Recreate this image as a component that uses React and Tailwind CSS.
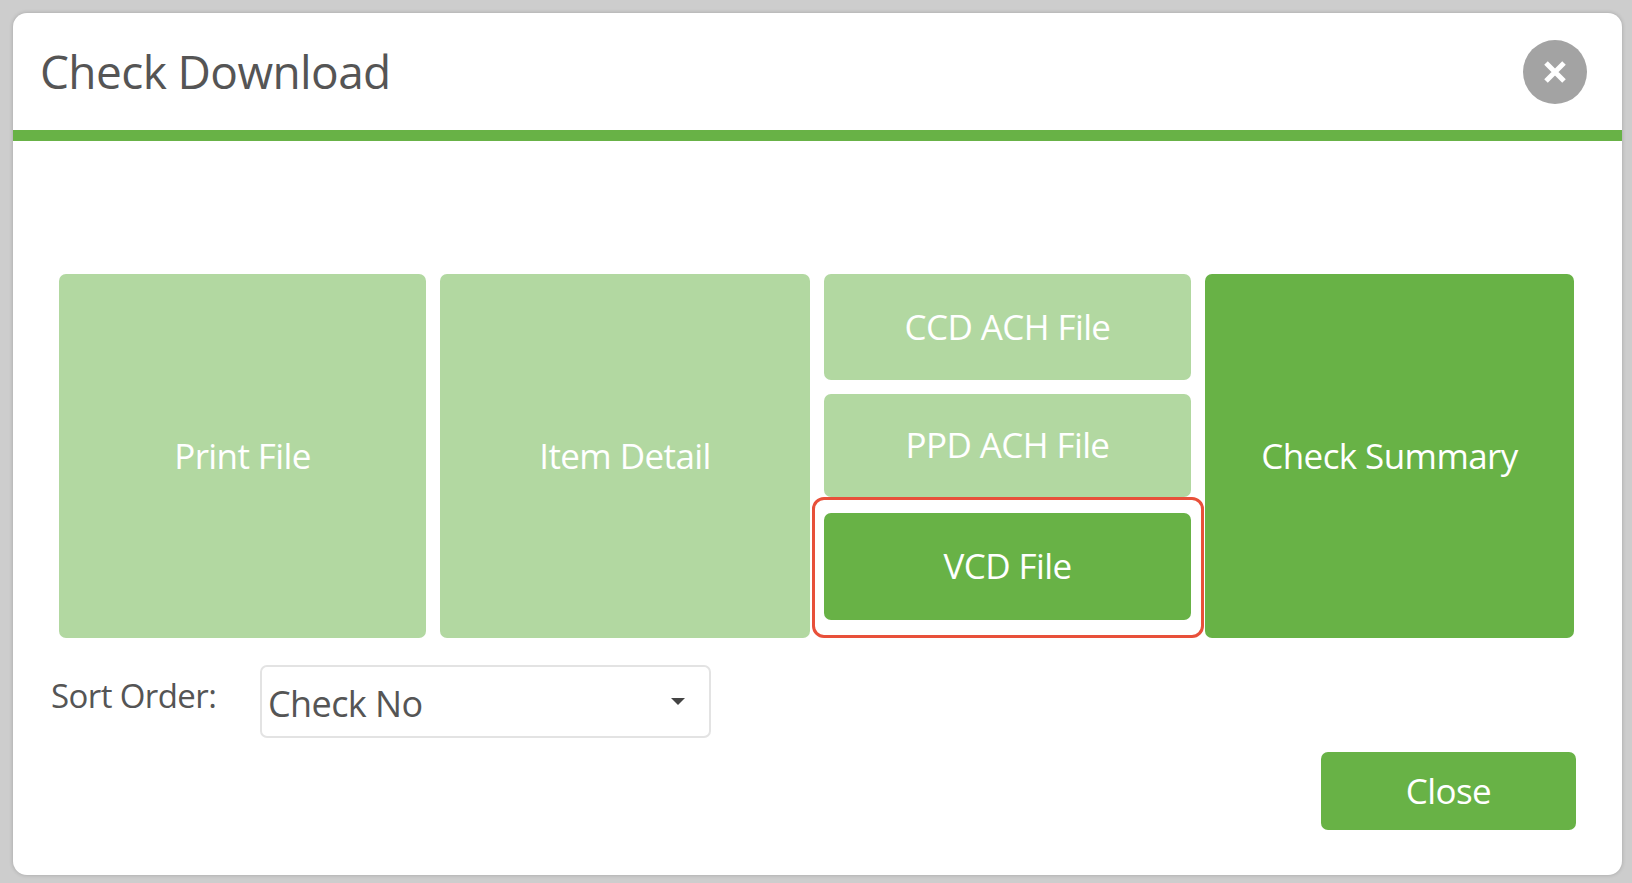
import React from "react";

const font = { };

function Tile({ children, active, className = "" }) {
  return (
    <div
      className={`flex items-center justify-center rounded-[7px] text-[35px] text-white ${active ? "bg-[#68b246]" : "bg-[#b2d8a1]"} ${className}`}
    >
      {children}
    </div>
  );
}

export default function App() {
  return (
    <div className="h-[883px] w-[1632px] overflow-hidden bg-[#cdcdcd] pt-[13px] pl-[13px] font-['Open_Sans','Noto_Sans',sans-serif] tracking-[-0.6px]">
      <div className="flex h-[862px] w-[1609px] flex-col rounded-[14px] bg-white shadow-[0_0_4px_rgba(0,0,0,0.2)]">
        <div className="flex h-[117px] items-center justify-between pr-[35px] pl-[27px]">
          <div className="text-[46px] text-[#555555]">Check Download</div>
          <div className="flex h-[64px] w-[64px] items-center justify-center rounded-full bg-[#a3a3a3]">
            <svg width="24" height="24" viewBox="0 0 24 24" fill="none" stroke="#fff" strokeWidth="5">
              <path d="M3 3 L21 21 M21 3 L3 21" />
            </svg>
          </div>
        </div>
        <div className="h-[11px] bg-[#68b246]" />
        <div className="px-[46px] pt-[133px]">
          <div className="grid h-[364px] w-[1517px] grid-cols-[367px_370px_367px_369px] gap-x-[14px]">
            <Tile>Print File</Tile>
            <Tile>Item Detail</Tile>
            <div className="flex flex-col">
              <Tile className="h-[106px]">CCD ACH File</Tile>
              <Tile className="mt-[14px] h-[103px]">PPD ACH File</Tile>
              <div className="relative mt-[16px]">
                <Tile active className="h-[107px]">VCD File</Tile>
                <div className="absolute -top-[16px] -right-[13px] -bottom-[18px] -left-[12px] rounded-[12px] border-[3px] border-[#e8503a]" />
              </div>
            </div>
            <Tile active>Check Summary</Tile>
          </div>
          <div className="flex h-[192px] items-start justify-between">
            <div className="mt-[27px] flex items-start">
              <div className="mt-[6px] -ml-[8px] w-[209px] text-[33px] text-[#555555]">Sort Order:</div>
              <div className="flex h-[73px] w-[451px] items-center justify-between rounded-[7px] border-2 border-[#e3e3e3] pr-[24px] pl-[6px] text-[36px] text-[#555555]">
                <span className="mt-[4px]">Check No</span>
                <span className="h-0 w-0 border-x-[7px] border-t-[7px] border-x-transparent border-t-[#444444]" />
              </div>
            </div>
            <div className="mt-[114px] flex h-[78px] w-[255px] items-center justify-center rounded-[7px] bg-[#68b246] text-[35px] text-white">
              Close
            </div>
          </div>
        </div>
      </div>
    </div>
  );
}
